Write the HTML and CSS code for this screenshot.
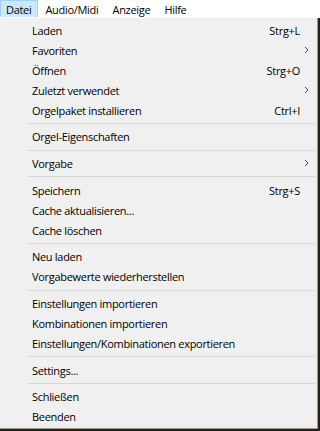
FILE: index.html
```html
<!DOCTYPE html>
<html lang="de">
<head>
    <meta charset="UTF-8">
    <meta name="viewport" content="width=device-width, initial-scale=1.0">
    <title>Datei-Menü</title>
    <link rel="stylesheet" href="styles.css">
</head>
<body>
    <div class="menubar">
        <span class="menu-title active">Datei</span>
        <span class="menu-title">Audio/Midi</span>
        <span class="menu-title">Anzeige</span>
        <span class="menu-title">Hilfe</span>
    </div>

    <div class="dropdown">
        <div class="item"><span class="label">Laden</span><span class="shortcut">Strg+L</span><span class="arrow"></span></div>
        <div class="item"><span class="label">Favoriten</span><span class="shortcut"></span><span class="arrow"><svg width="5" height="8" viewBox="0 0 5 8"><path d="M1 1 L4 4 L1 7" fill="none" stroke="#444" stroke-width="1"/></svg></span></div>
        <div class="item"><span class="label">Öffnen</span><span class="shortcut">Strg+O</span><span class="arrow"></span></div>
        <div class="item"><span class="label">Zuletzt verwendet</span><span class="shortcut"></span><span class="arrow"><svg width="5" height="8" viewBox="0 0 5 8"><path d="M1 1 L4 4 L1 7" fill="none" stroke="#444" stroke-width="1"/></svg></span></div>
        <div class="item"><span class="label">Orgelpaket installieren</span><span class="shortcut">Ctrl+I</span><span class="arrow"></span></div>
        <div class="sep"></div>
        <div class="item"><span class="label">Orgel-Eigenschaften</span></div>
        <div class="sep"></div>
        <div class="item"><span class="label">Vorgabe</span><span class="shortcut"></span><span class="arrow"><svg width="5" height="8" viewBox="0 0 5 8"><path d="M1 1 L4 4 L1 7" fill="none" stroke="#444" stroke-width="1"/></svg></span></div>
        <div class="sep"></div>
        <div class="item"><span class="label">Speichern</span><span class="shortcut">Strg+S</span><span class="arrow"></span></div>
        <div class="item"><span class="label">Cache aktualisieren...</span></div>
        <div class="item"><span class="label">Cache löschen</span></div>
        <div class="sep"></div>
        <div class="item"><span class="label">Neu laden</span></div>
        <div class="item"><span class="label">Vorgabewerte wiederherstellen</span></div>
        <div class="sep"></div>
        <div class="item"><span class="label">Einstellungen importieren</span></div>
        <div class="item"><span class="label">Kombinationen importieren</span></div>
        <div class="item"><span class="label">Einstellungen/Kombinationen exportieren</span></div>
        <div class="sep"></div>
        <div class="item"><span class="label">Settings...</span></div>
        <div class="sep"></div>
        <div class="item"><span class="label">Schließen</span></div>
        <div class="item"><span class="label">Beenden</span></div>
    </div>
</body>
</html>
```

FILE: styles.css
```css
body {
    margin: 0;
    background: #2a2212;
    font-family: "Open Sans", Lato, sans-serif;
    font-size: 11px;
    letter-spacing: -0.3px;
    color: #000;
    width: 320px;
    height: 431px;
    overflow: hidden;
}

.menubar {
    display: flex;
    height: 18px;
    background: #fff;
}

.menu-title {
    display: flex;
    align-items: center;
    height: 17px;
    padding: 0 6px;
    border: 1px solid transparent;
    border-bottom: none;
    box-sizing: border-box;
}

.menu-title.active {
    background: #cce8ff;
    border-color: #99d1ff;
    padding-left: 5px;
}

.dropdown {
    width: 318px;
    box-sizing: border-box;
    padding: 2px 0 1px;
    background: #f0f0f0;
    border: 1px solid #979797;
    border-top: none;
    border-left: none;
}

.item {
    display: flex;
    align-items: center;
    height: 20px;
    padding-left: 32px;
}

.label {
    flex: 1;
    white-space: nowrap;
}

.shortcut {
    white-space: nowrap;
}

.arrow {
    display: flex;
    align-items: center;
    width: 17px;
    padding-left: 4px;
    box-sizing: border-box;
}

.sep {
    height: 1px;
    margin: 3px 2px 2.7px 28px;
    background: #d7d7d7;
}
```
